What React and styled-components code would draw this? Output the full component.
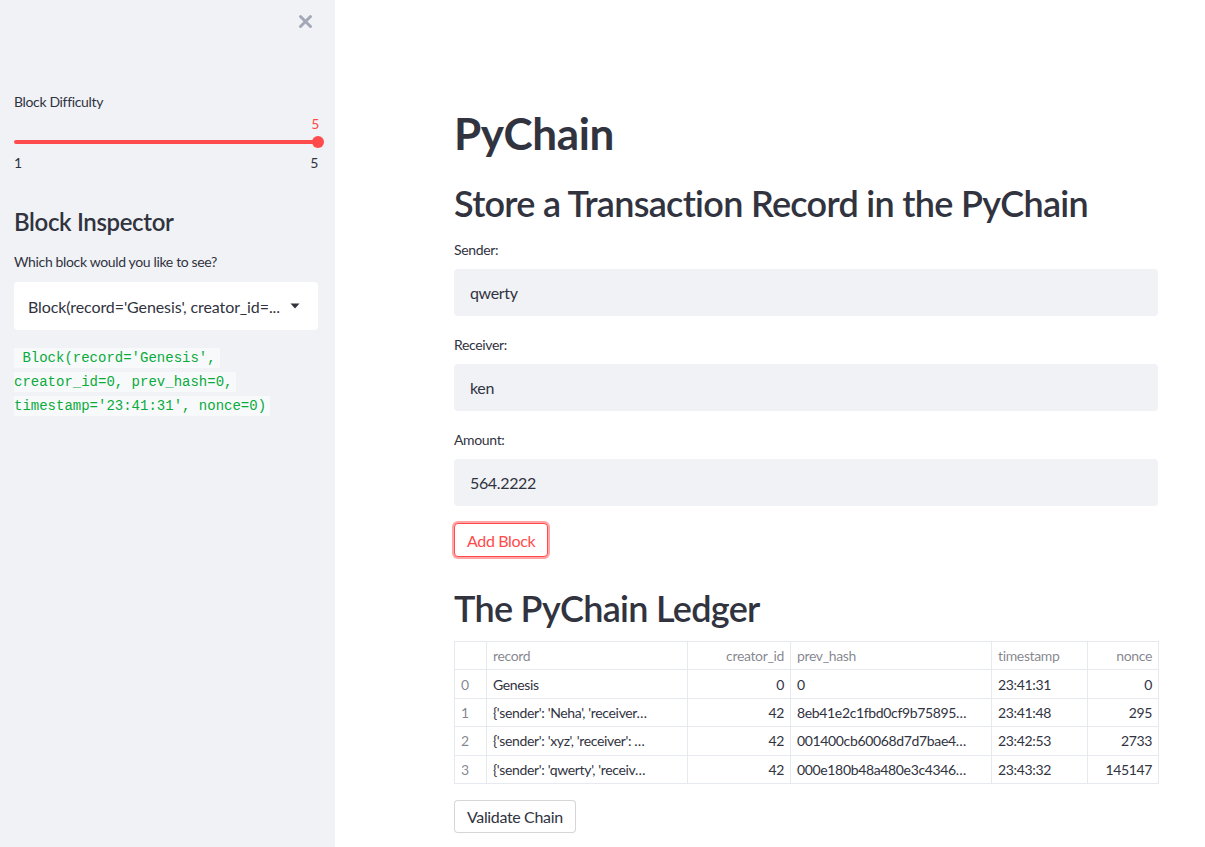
import React from "react";
import styled, { createGlobalStyle } from "styled-components";

const GlobalStyle = createGlobalStyle`
  html, body { margin: 0; padding: 0; background: #ffffff; }
  body { font-family: Lato, "Open Sans", sans-serif; color: #31333f; letter-spacing: -0.35px; }
  * { box-sizing: border-box; }
`;

const Page = styled.div`
  display: flex;
  width: 1205px;
  height: 847px;
  overflow: hidden;
`;

const Sidebar = styled.aside`
  width: 335px;
  flex-shrink: 0;
  background: #f0f2f6;
  padding: 0 17px 0 14px;
  display: flex;
  flex-direction: column;
`;

const CloseRow = styled.div`
  display: flex;
  justify-content: flex-end;
  padding: 14px 5px 0 0;
  height: 92px;
`;

const Label = styled.div`
  font-size: 14px;
  line-height: 20px;
  color: #31333f;
  margin-top: ${p => p.$top || 0}px;
`;

const SliderValue = styled.div`
  text-align: right;
  color: #ff4b4b;
  font-size: 14px;
  line-height: 16px;
  margin-top: 4px;
  transform: translateX(1px);
`;

const Track = styled.div`
  position: relative;
  height: 4px;
  border-radius: 2px;
  background: #ff4b4b;
  margin: 8px 0 0;
`;

const Thumb = styled.div`
  position: absolute;
  right: -6px;
  top: -4px;
  width: 12px;
  height: 12px;
  border-radius: 50%;
  background: #ff4b4b;
`;

const Ticks = styled.div`
  display: flex;
  justify-content: space-between;
  font-size: 14px;
  line-height: 16px;
  margin-top: 11px;
  color: #31333f;
`;

const SideHeading = styled.h2`
  margin: 36px 0 0;
  font-size: 24px;
  line-height: 30px;
  font-weight: 600;
  color: #31333f;
`;

const SelectBox = styled.div`
  margin-top: 10px;
  height: 48px;
  background: #ffffff;
  border-radius: 4px;
  display: flex;
  align-items: center;
  justify-content: space-between;
  padding: 0 18px 0 14px;
  font-size: 16px;
  letter-spacing: -0.1px;
  color: #31333f;
`;

const CodeWrap = styled.div`
  margin-top: 16px;
  width: 280px;
  font-family: "Liberation Mono", "DejaVu Sans Mono", monospace;
  font-size: 14px;
  line-height: 24px;
  letter-spacing: 0;
`;

const Code = styled.code`
  font-family: inherit;
  color: #09ab3b;
  background: #f8f9fb;
  padding: 2px 4px 2px 0;
  -webkit-box-decoration-break: clone;
  box-decoration-break: clone;
`;

const Main = styled.main`
  flex: 1;
  padding: 107px 0 0 119px;
`;

const Content = styled.div`
  width: 704px;
  display: flex;
  flex-direction: column;
`;

const Title = styled.h1`
  margin: 0;
  font-size: 44px;
  line-height: 53px;
  font-weight: 700;
  color: #31333f;
  letter-spacing: -0.4px;
`;

const Heading = styled.h2`
  margin: ${p => p.$top}px 0 0;
  font-size: 36px;
  line-height: 43px;
  font-weight: 600;
  color: #31333f;
  letter-spacing: -0.7px;
`;

const Field = styled.div`
  display: flex;
  flex-direction: column;
  gap: 9px;
  margin-top: ${p => p.$top}px;
`;

const Input = styled.div`
  height: 47px;
  background: #f0f2f6;
  border-radius: 4px;
  display: flex;
  align-items: center;
  padding: 0 16px;
  font-size: 16px;
  color: #31333f;
`;

const Button = styled.button`
  align-self: flex-start;
  margin-top: ${p => p.$top}px;
  height: ${p => p.$h}px;
  padding: 0 12px;
  font-family: inherit;
  letter-spacing: inherit;
  font-size: 16px;
  background: #ffffff;
  border-radius: 4px;
  border: 1px solid ${p => (p.$active ? "#ff4b4b" : "rgba(49, 51, 63, 0.2)")};
  color: ${p => (p.$active ? "#ff4b4b" : "#31333f")};
  box-shadow: ${p => (p.$active ? "0 0 0 2px rgba(255, 75, 75, 0.5)" : "none")};
`;

const Table = styled.table`
  margin-top: 11px;
  width: 704px;
  border-collapse: collapse;
  table-layout: fixed;
  font-size: 14px;
  border: 1px solid #e6e9ef;
`;

const Th = styled.th`
  height: 28.4px;
  padding: 0 6px;
  font-weight: 400;
  color: rgba(49, 51, 63, 0.6);
  text-align: ${p => (p.$num ? "right" : "left")};
  border: 1px solid #e6e9ef;
  white-space: nowrap;
`;

const Td = styled.td`
  height: 28.4px;
  padding: 0 6px;
  color: ${p => (p.$index ? "rgba(49, 51, 63, 0.6)" : "#31333f")};
  text-align: ${p => (p.$num ? "right" : "left")};
  border: 1px solid #e6e9ef;
  white-space: nowrap;
  overflow: hidden;
`;

const CloseIcon = () => (
  <svg width="15" height="15" viewBox="0 0 15 15">
    <path d="M2.5 2.5 L12.5 12.5 M12.5 2.5 L2.5 12.5" stroke="#a3a8b8" strokeWidth="3" strokeLinecap="round" />
  </svg>
);

const Caret = () => (
  <svg width="10" height="6" viewBox="0 0 10 6">
    <path d="M0.5 0.5 L9.5 0.5 L5 5.5 Z" fill="#31333f" />
  </svg>
);

const rows = [
  ["0", "Genesis", "0", "0", "23:41:31", "0"],
  ["1", "{'sender': 'Neha', 'receiver…", "42", "8eb41e2c1fbd0cf9b75895…", "23:41:48", "295"],
  ["2", "{'sender': 'xyz', 'receiver': …", "42", "001400cb60068d7d7bae4…", "23:42:53", "2733"],
  ["3", "{'sender': 'qwerty', 'receiv…", "42", "000e180b48a480e3c4346…", "23:43:32", "145147"],
];

export default function App() {
  return (
    <>
      <GlobalStyle />
      <Page>
        <Sidebar>
          <CloseRow>
            <CloseIcon />
          </CloseRow>
          <Label>Block Difficulty</Label>
          <SliderValue>5</SliderValue>
          <Track>
            <Thumb />
          </Track>
          <Ticks>
            <span>1</span>
            <span>5</span>
          </Ticks>
          <SideHeading>Block Inspector</SideHeading>
          <Label $top={15}>Which block would you like to see?</Label>
          <SelectBox>
            <span>Block(record='Genesis', creator_id=...</span>
            <Caret />
          </SelectBox>
          <CodeWrap>
            <Code>{"\u00a0"}Block(record='Genesis', creator_id=0, prev_hash=0, timestamp='23:41:31', nonce=0)</Code>
          </CodeWrap>
        </Sidebar>
        <Main>
          <Content>
            <Title>PyChain</Title>
            <Heading $top={22}>Store a Transaction Record in the PyChain</Heading>
            <Field $top={15}>
              <Label>Sender:</Label>
              <Input>qwerty</Input>
            </Field>
            <Field $top={19}>
              <Label>Receiver:</Label>
              <Input>ken</Input>
            </Field>
            <Field $top={19}>
              <Label>Amount:</Label>
              <Input>564.2222</Input>
            </Field>
            <Button $active $top={17} $h={34}>Add Block</Button>
            <Heading $top={30}>The PyChain Ledger</Heading>
            <Table>
              <colgroup>
                <col style={{ width: 32 }} />
                <col style={{ width: 201 }} />
                <col style={{ width: 103 }} />
                <col style={{ width: 201 }} />
                <col style={{ width: 96 }} />
                <col style={{ width: 71 }} />
              </colgroup>
              <thead>
                <tr>
                  <Th></Th>
                  <Th>record</Th>
                  <Th $num>creator_id</Th>
                  <Th>prev_hash</Th>
                  <Th>timestamp</Th>
                  <Th $num>nonce</Th>
                </tr>
              </thead>
              <tbody>
                {rows.map(r => (
                  <tr key={r[0]}>
                    <Td $index>{r[0]}</Td>
                    <Td>{r[1]}</Td>
                    <Td $num>{r[2]}</Td>
                    <Td>{r[3]}</Td>
                    <Td>{r[4]}</Td>
                    <Td $num>{r[5]}</Td>
                  </tr>
                ))}
              </tbody>
            </Table>
            <Button $top={16} $h={33}>Validate Chain</Button>
          </Content>
        </Main>
      </Page>
    </>
  );
}
